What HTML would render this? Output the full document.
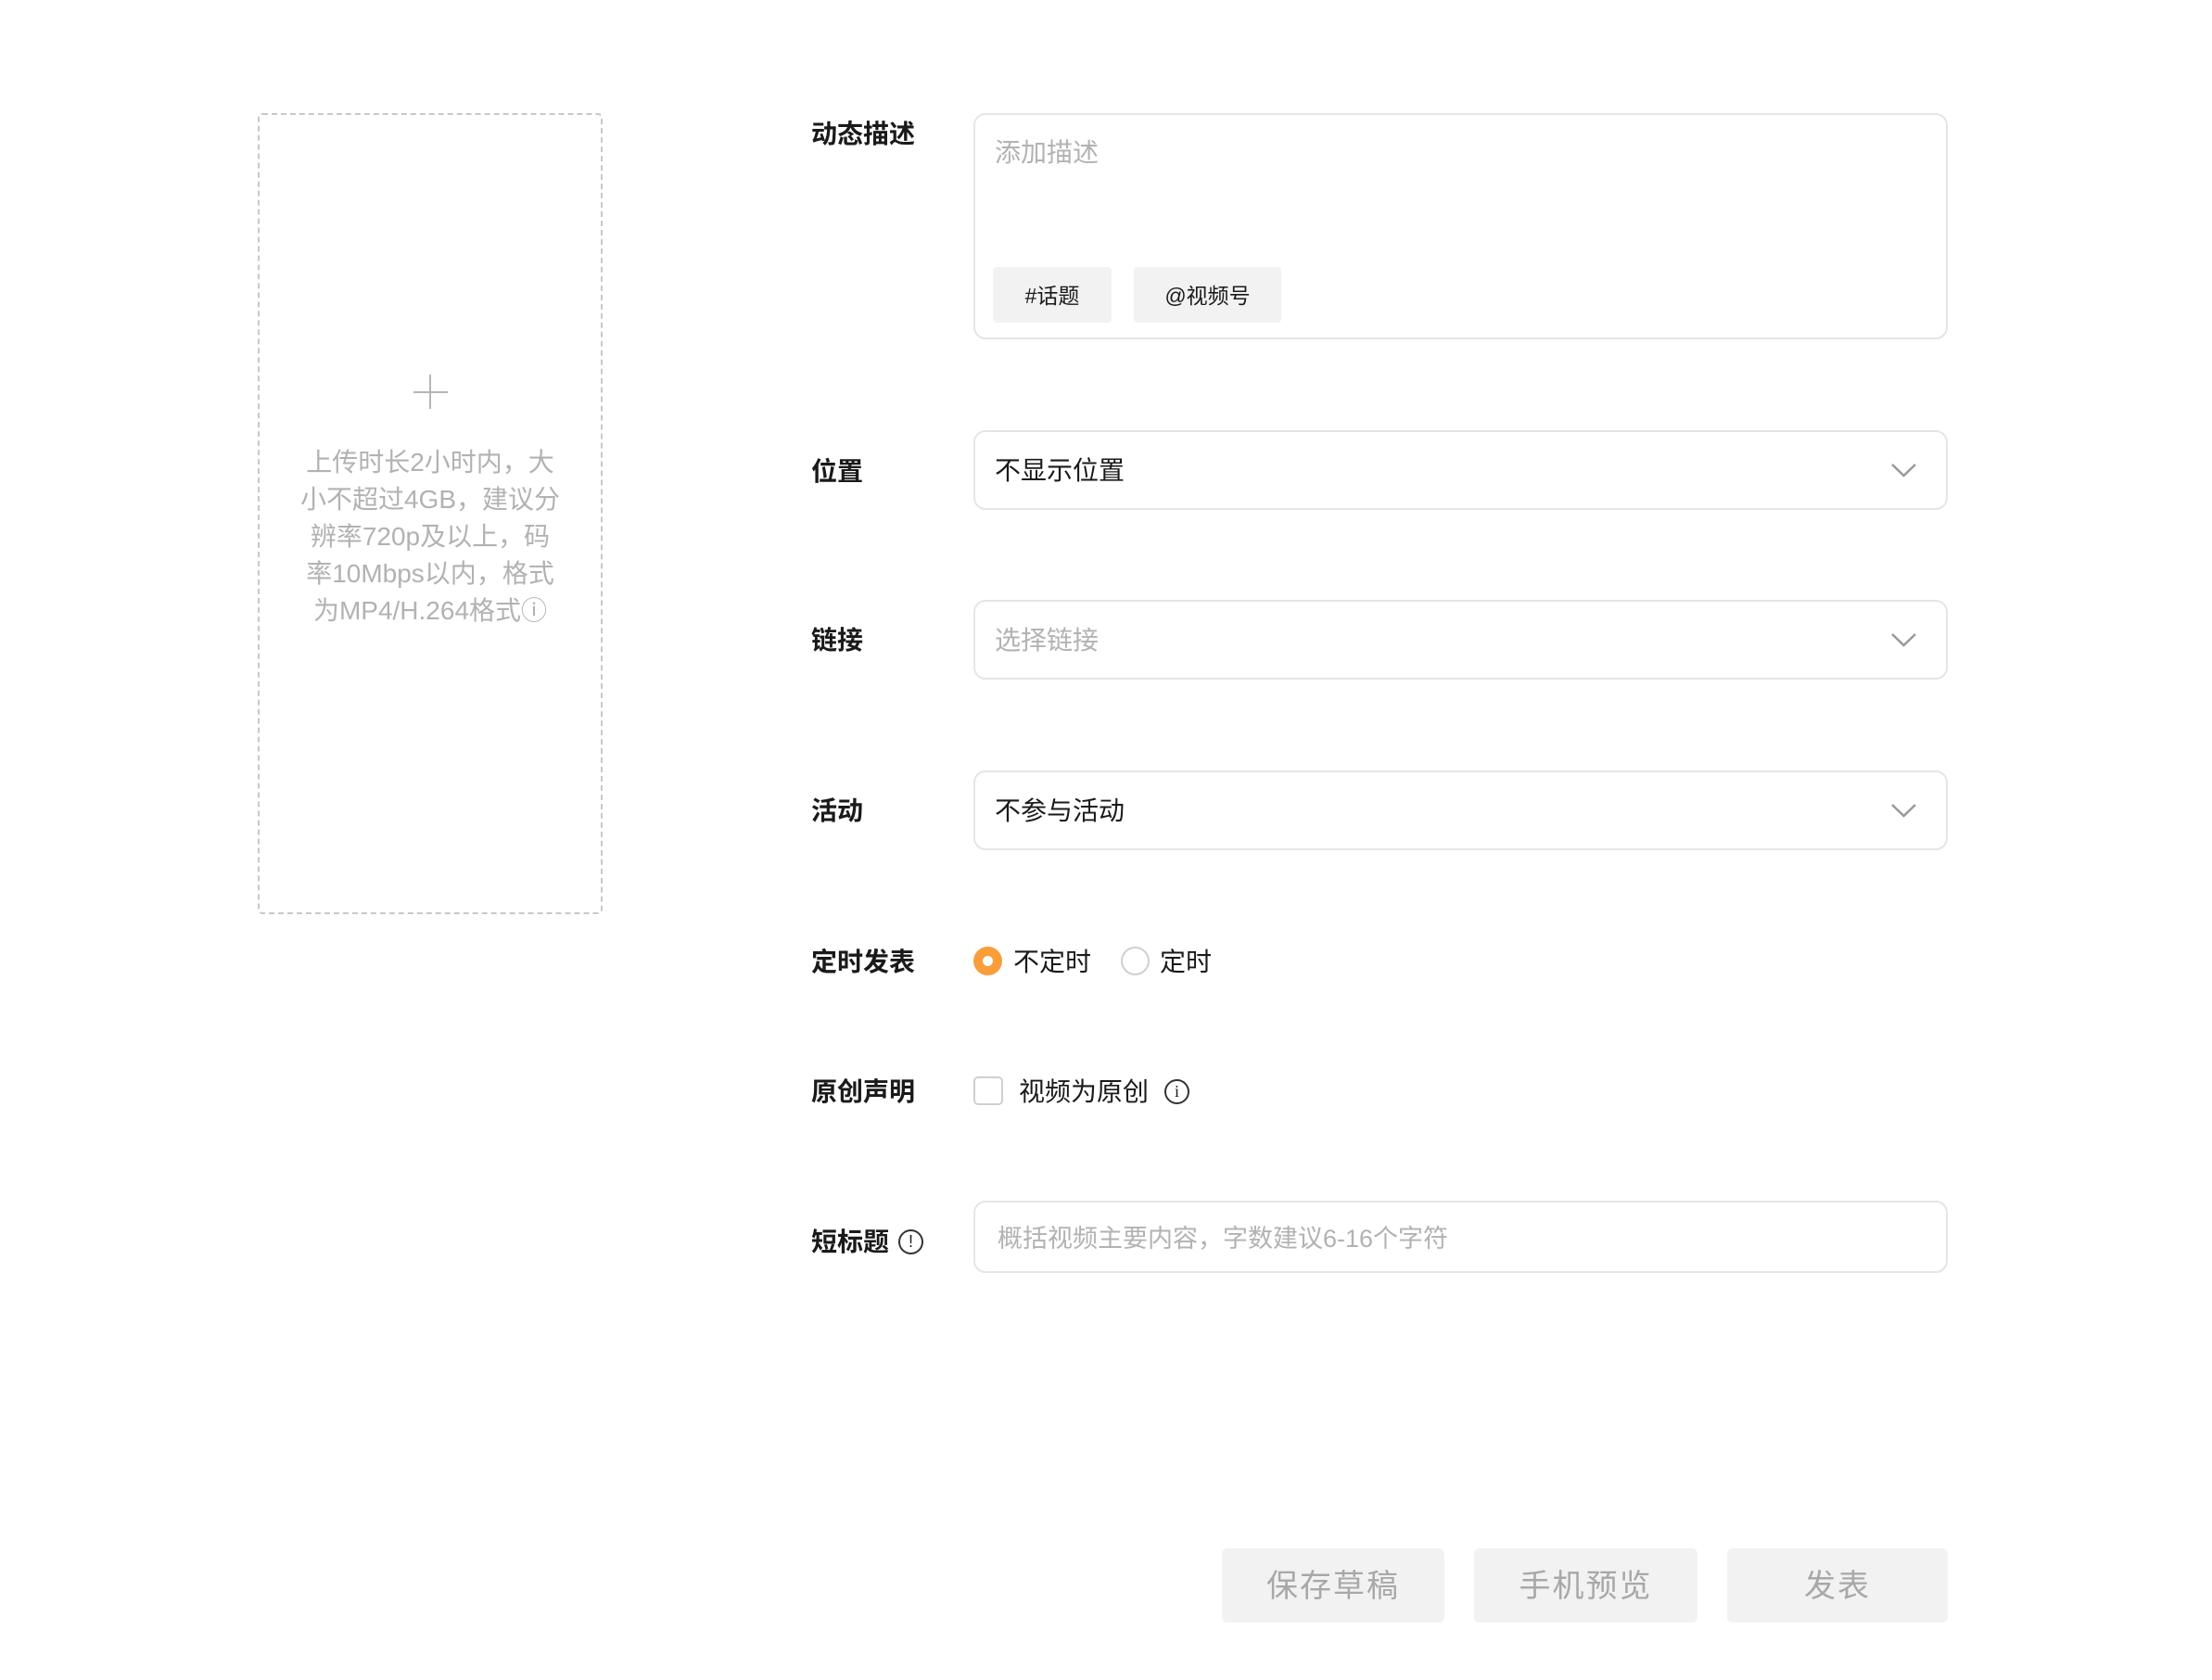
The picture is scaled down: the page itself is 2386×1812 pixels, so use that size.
<!DOCTYPE html>
<html><head><meta charset="utf-8"><style>
*{margin:0;padding:0;box-sizing:border-box}
body{width:2386px;height:1812px;background:#fff;position:relative;overflow:hidden;font-family:"Liberation Sans","Noto Sans CJK SC",sans-serif;color:#1a1a1a}
.a{position:absolute}
.lbl{position:absolute;left:875px;font-size:28px;font-weight:600;line-height:40px;transform:translateY(-50%);white-space:nowrap;margin-top:2px}
.box{position:absolute;left:1050px;width:1051px;border:2px solid #e5e5e5;border-radius:13px;background:#fff}
.sel{height:86px;font-size:28px;line-height:84px;padding-left:21px}
.chev{position:absolute;right:32px;top:50%;margin-top:-7px}
.tag{position:absolute;top:288px;height:60px;background:#f2f2f2;border-radius:4px;font-size:23px;line-height:62px;text-align:center;color:#1a1a1a}
.btn{position:absolute;top:1670px;height:80px;background:#f2f2f2;border-radius:6px;color:#a8a8a8;font-size:34px;line-height:82px;text-align:center;letter-spacing:2px}
.info{position:absolute;width:27px;height:27px;border:2px solid #333;border-radius:50%;font-size:18px;line-height:23px;text-align:center;font-family:"Liberation Serif",serif}
</style></head><body>
<div class="a" style="left:278px;top:122px;width:372px;height:864px;border:2px dashed #c8c8c8;border-radius:5px"></div>
<div class="a" style="left:446px;top:422px;width:37px;height:2px;background:#b5b5b5"></div>
<div class="a" style="left:463px;top:404px;width:2px;height:37px;background:#b5b5b5"></div>
<div class="a" style="left:284px;top:479px;width:360px;text-align:center;font-size:28px;line-height:40px;color:#b2b2b2">上传时长2小时内，大<br>小不超过4GB，建议分<br>辨率720p及以上，码<br>率10Mbps以内，格式<br>为MP4/H.264格式ⓘ</div>

<div class="lbl" style="top:143px">动态描述</div>
<div class="lbl" style="top:507px">位置</div>
<div class="lbl" style="top:689px">链接</div>
<div class="lbl" style="top:873px">活动</div>
<div class="lbl" style="top:1036px">定时发表</div>
<div class="lbl" style="top:1176px">原创声明</div>
<div class="lbl" style="top:1338px">短标题</div>
<div class="info" style="left:969px;top:1326px;font-family:'Liberation Sans',sans-serif;font-weight:400">!</div>

<div class="box" style="top:122px;height:244px"></div>
<div class="a" style="left:1073px;top:145px;font-size:28px;line-height:40px;color:#b2b2b2">添加描述</div>
<div class="tag" style="left:1071px;width:128px">#话题</div>
<div class="tag" style="left:1223px;width:159px">@视频号</div>

<div class="box sel" style="top:464px">不显示位置<svg class="chev" width="27" height="15" viewBox="0 0 27 15"><path d="M1 1L13.5 13L26 1" fill="none" stroke="#999" stroke-width="2.5"/></svg></div>
<div class="box sel" style="top:647px;color:#b2b2b2">选择链接<svg class="chev" width="27" height="15" viewBox="0 0 27 15"><path d="M1 1L13.5 13L26 1" fill="none" stroke="#999" stroke-width="2.5"/></svg></div>
<div class="box sel" style="top:831px">不参与活动<svg class="chev" width="27" height="15" viewBox="0 0 27 15"><path d="M1 1L13.5 13L26 1" fill="none" stroke="#999" stroke-width="2.5"/></svg></div>

<div class="a" style="left:1050px;top:1021px;width:31px;height:31px;border-radius:50%;background:#fa9d3b"></div>
<div class="a" style="left:1060px;top:1031px;width:11px;height:11px;border-radius:50%;background:#fff"></div>
<div class="a" style="left:1093px;top:1018px;font-size:28px;line-height:40px">不定时</div>
<div class="a" style="left:1209px;top:1021px;width:31px;height:31px;border-radius:50%;border:2px solid #d0d0d0"></div>
<div class="a" style="left:1251px;top:1018px;font-size:28px;line-height:40px">定时</div>

<div class="a" style="left:1050px;top:1161px;width:32px;height:31px;border-radius:5px;border:2px solid #d0d0d0"></div>
<div class="a" style="left:1099px;top:1158px;font-size:28px;line-height:40px">视频为原创</div>
<div class="info" style="left:1256px;top:1164px">i</div>

<div class="box" style="top:1295px;height:78px"></div>
<div class="a" style="left:1076px;top:1316px;font-size:27px;line-height:40px;color:#b2b2b2">概括视频主要内容，字数建议6-16个字符</div>

<div class="btn" style="left:1318px;width:240px">保存草稿</div>
<div class="btn" style="left:1590px;width:241px">手机预览</div>
<div class="btn" style="left:1863px;width:238px">发表</div>
</body></html>
